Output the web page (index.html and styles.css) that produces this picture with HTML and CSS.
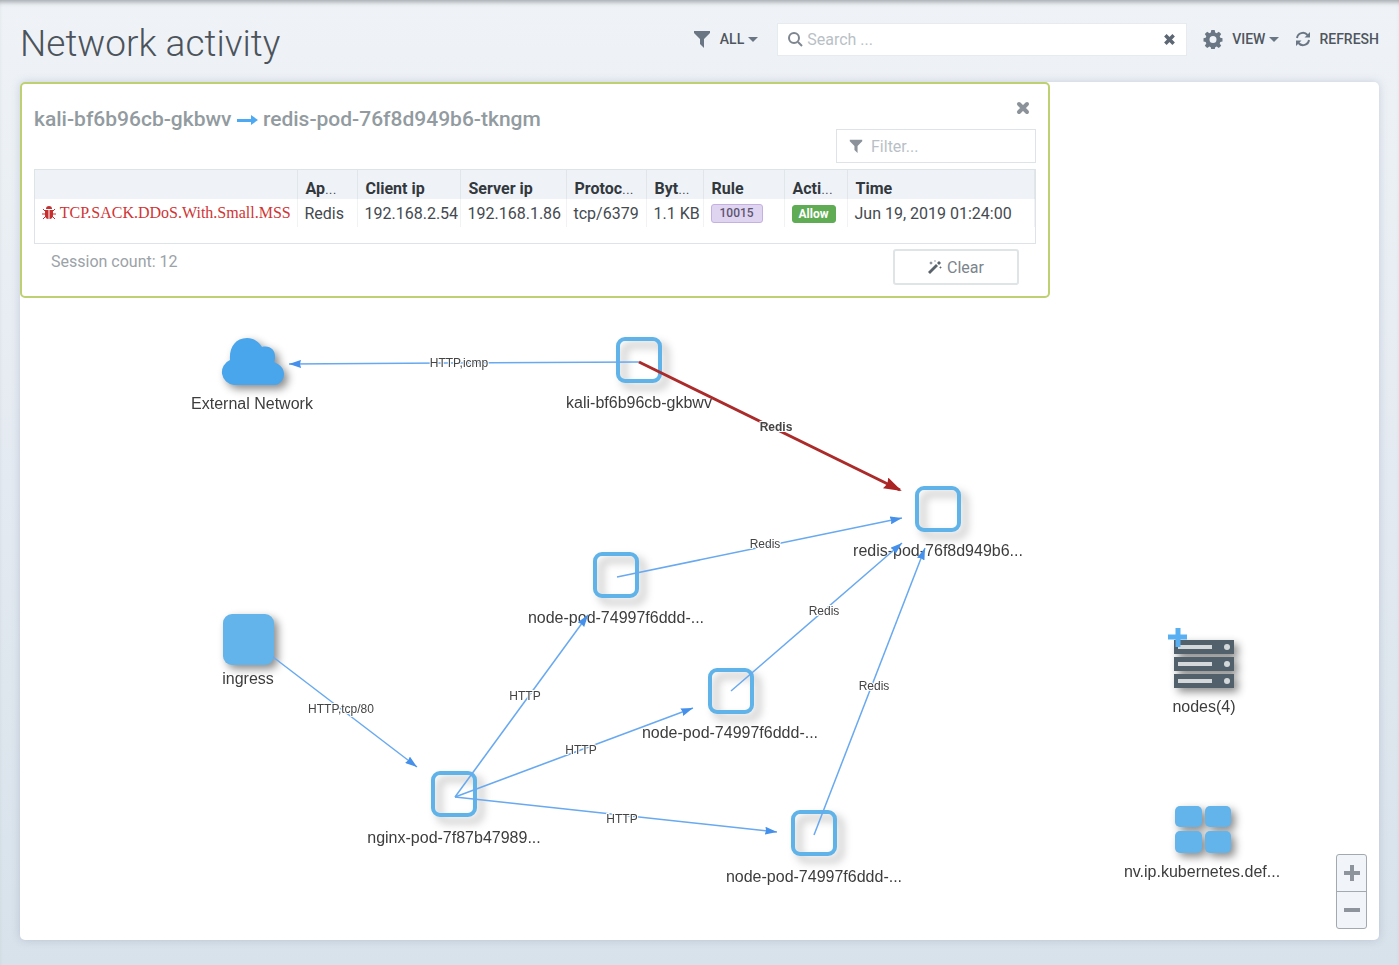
FILE: index.html
```html
<!DOCTYPE html>
<html lang="en">
<head>
    <meta charset="utf-8">
    <title>Network activity</title>
    <link rel="stylesheet" href="styles.css">
</head>
<body>
    <header class="header">
        <h1>Network activity</h1>
        <div class="toolbar">
            <button class="tool" type="button">
                <svg class="icon-filter" width="18" height="18" viewBox="0 0 18 18"><path d="M1 1h16v2l-6 6v9l-4-4V9L1 3z"/></svg>
                ALL
                <span class="caret"></span>
            </button>
            <div class="search">
                <svg width="16" height="16" viewBox="0 0 16 16"><circle cx="7" cy="7" r="5"/><path d="M11 11l4 4"/></svg>
                <input type="text" placeholder="Search ..." aria-label="Search">
                <button class="search-clear" type="button" aria-label="Clear search">
                    <svg width="13" height="13" viewBox="0 0 11 11"><path d="M2 2l7 7M9 2l-7 7"/></svg>
                </button>
            </div>
            <button class="tool view" type="button">
                <svg width="20" height="20" viewBox="0 0 20 20">
                    <path fill-rule="evenodd" d="M8.3 1h3.4l.5 2.6 1.4.6 2.2-1.5 2.4 2.4-1.5 2.2.6 1.4 2.2.5v3.4l-2.2.5-.6 1.4 1.5 2.2-2.4 2.4-2.2-1.5-1.4.6-.5 2.3H8.3l-.5-2.3-1.4-.6-2.2 1.5-2.4-2.4 1.5-2.2-.6-1.4-2.2-.5V9.2l2.2-.5.6-1.4-1.5-2.2 2.4-2.4 2.2 1.5 1.4-.6zM10 7a3.5 3.5 0 1 0 0 7 3.5 3.5 0 0 0 0-7z"/>
                </svg>
                VIEW
                <span class="caret"></span>
            </button>
            <button class="tool refresh" type="button">
                <svg width="16" height="16" viewBox="0 0 16 16">
                    <path class="arc" d="M2 7a6 6 0 0 1 10.5-3M14 9a6 6 0 0 1-10.5 3"/>
                    <path d="M15 1v5.5H9.5zM1 15V9.5h5.5z"/>
                </svg>
                REFRESH
            </button>
        </div>
    </header>

    <main class="canvas">
        <svg class="graph" role="img" aria-label="Network graph">
            <defs>
                <marker id="arrow" markerUnits="userSpaceOnUse" markerWidth="14" markerHeight="8" refX="12" refY="4" orient="auto">
                    <path class="arrow" d="M0 0l12 4-12 4 1-4z"/>
                </marker>
                <marker id="arrow-alert" markerUnits="userSpaceOnUse" markerWidth="20" markerHeight="12" refX="16" refY="6" orient="auto">
                    <path class="arrow-alert" d="M0 0l18 6-18 6 2-6z"/>
                </marker>
                <rect id="pod" x="-21" y="-21" width="42" height="42" rx="7"/>
            </defs>

            <!-- nodes -->
            <g class="node cloud">
                <path d="M214 303a13 13 0 0 1-4-25c-1-12 5-22 17-22 7 0 12 4 15 9 8-2 13 3 13 9 0 3 0 5-1 6 7 3 10 7 10 12 0 6-4 11-10 11z"/>
            </g>
            <g class="node pod">
                <use href="#pod" x="619" y="278"/>
                <use href="#pod" x="918" y="427"/>
                <use href="#pod" x="596" y="493"/>
                <use href="#pod" x="711" y="609"/>
                <use href="#pod" x="794" y="751"/>
                <use href="#pod" x="434" y="712"/>
            </g>
            <g class="node group">
                <rect x="203" y="532" width="51" height="51" rx="9"/>
            </g>
            <g class="node group">
                <rect x="1155" y="724" width="27" height="21" rx="5"/>
                <rect x="1185" y="724" width="26" height="21" rx="5"/>
                <rect x="1155" y="749" width="27" height="22" rx="5"/>
                <rect x="1185" y="749" width="26" height="22" rx="5"/>
            </g>
            <g class="node server">
                <path d="M1154 558h60v14h-60zM1154 575h60v14h-60zM1154 592h60v14h-60z"/>
                <path class="slot" d="M1158 563h34v4h-34zM1158 580h34v4h-34zM1158 597h34v4h-34z"/>
                <circle class="slot" cx="1207" cy="565" r="3"/>
                <circle class="slot" cx="1207" cy="582" r="3"/>
                <circle class="slot" cx="1207" cy="599" r="3"/>
            </g>
            <path class="expand" d="M1158 546v19M1148 555h19"/>

            <g class="node-label">
                <text x="232" y="327">External Network</text>
                <text x="619" y="326">kali-bf6b96cb-gkbwv</text>
                <text x="918" y="474">redis-pod-76f8d949b6...</text>
                <text x="596" y="541">node-pod-74997f6ddd-...</text>
                <text x="710" y="656">node-pod-74997f6ddd-...</text>
                <text x="794" y="800">node-pod-74997f6ddd-...</text>
                <text x="434" y="761">nginx-pod-7f87b47989...</text>
                <text x="228" y="602">ingress</text>
                <text x="1184" y="630">nodes(4)</text>
                <text x="1182" y="795">nv.ip.kubernetes.def...</text>
            </g>

            <!-- edges -->
            <g class="edge">
                <path d="M619 280L269 282"/>
                <path d="M597 495L882 436"/>
                <path d="M711 609L882 461"/>
                <path d="M794 753L905 466"/>
                <path d="M435 715L568 533"/>
                <path d="M435 715L673 626"/>
                <path d="M435 715L757 750"/>
                <path d="M253 575L397 685"/>
            </g>
            <path class="edge-alert" d="M619 280L880 408"/>

            <g class="edge-label">
                <text x="439" y="285">HTTP,icmp</text>
                <text x="745" y="466">Redis</text>
                <text x="804" y="533">Redis</text>
                <text x="854" y="608">Redis</text>
                <text x="505" y="618">HTTP</text>
                <text x="561" y="672">HTTP</text>
                <text x="602" y="741">HTTP</text>
                <text x="321" y="631">HTTP,tcp/80</text>
                <text class="alert" x="756" y="349">Redis</text>
            </g>
        </svg>

        <section class="sessions">
            <div class="sessions-head">
                <h2>
                    kali-bf6b96cb-gkbwv
                    <svg width="21" height="12" viewBox="0 0 21 12"><path d="M0 5h14V1l7 5-7 5V8H0z"/></svg>
                    redis-pod-76f8d949b6-tkngm
                </h2>
                <div class="sessions-tools">
                    <button class="close" type="button" aria-label="Close">
                        <svg width="14" height="14" viewBox="0 0 14 14"><path d="M3 3l8 8M11 3l-8 8"/></svg>
                    </button>
                    <label class="filter">
                        <svg width="14" height="14" viewBox="0 0 18 18"><path d="M1 1h16v2l-6 6v9l-4-4V9L1 3z"/></svg>
                        <input type="text" placeholder="Filter..." aria-label="Filter sessions">
                    </label>
                </div>
            </div>

            <div class="grid">
                <table>
                    <colgroup>
                        <col class="col-threat">
                        <col class="col-app">
                        <col class="col-client">
                        <col class="col-server">
                        <col class="col-protocol">
                        <col class="col-bytes">
                        <col class="col-rule">
                        <col class="col-action">
                        <col>
                    </colgroup>
                    <thead>
                        <tr>
                            <th></th>
                            <th>Ap<i>...</i></th>
                            <th>Client ip</th>
                            <th>Server ip</th>
                            <th>Protoc<i>...</i></th>
                            <th>Byt<i>...</i></th>
                            <th>Rule</th>
                            <th>Acti<i>...</i></th>
                            <th>Time</th>
                        </tr>
                    </thead>
                    <tbody>
                        <tr>
                            <td class="threat">
                                <svg width="14" height="14" viewBox="0 0 14 14">
                                    <path d="M4 3a3 3 0 0 1 6 0z"/>
                                    <path d="M3 4h3.500v9C4 13 3 11 3 9zM7.500 4H11v5c0 2-1 4-3.500 4z"/>
                                    <path class="legs" d="M1 3l3 3M13 3l-3 3M0 8h4M14 8h-4M1 13l3-3M13 13l-3-3"/>
                                </svg>
                                TCP.SACK.DDoS.With.Small.MSS
                            </td>
                            <td>Redis</td>
                            <td>192.168.2.54</td>
                            <td>192.168.1.86</td>
                            <td>tcp/6379</td>
                            <td>1.1 KB</td>
                            <td><span class="badge rule">10015</span></td>
                            <td><span class="badge allow">Allow</span></td>
                            <td>Jun 19, 2019 01:24:00</td>
                        </tr>
                    </tbody>
                </table>
            </div>

            <div class="sessions-foot">
                <span>Session count: 12</span>
                <button class="clear" type="button">
                    <svg width="14" height="14" viewBox="0 0 14 14">
                        <path d="M0 12L8 4l2 2-8 8zM9 3l2-2 2 2-2 2z"/>
                        <path d="M3 1l.5 1.5L5 3l-1.500.5L3 5l-.5-1.500L1 3l1.500-.5zM7 0l.3.7.7.3-.7.3L7 2l-.3-.7L6 1l.7-.3zM12.500 6l.4 1.100 1.100.4-1.100.4-.4 1.100-.4-1.100L11 7.500l1.100-.4z"/>
                    </svg>
                    Clear
                </button>
            </div>
        </section>

        <div class="zoom">
            <button type="button" aria-label="Zoom in">
                <svg width="18" height="18" viewBox="0 0 18 18"><path d="M9 1v16M1 9h16"/></svg>
            </button>
            <button type="button" aria-label="Zoom out">
                <svg width="18" height="18" viewBox="0 0 18 18"><path d="M1 9h16"/></svg>
            </button>
        </div>
    </main>
</body>
</html>
```
FILE: styles.css
```css
* {
    box-sizing: border-box;
}
body {
    margin: 0;
    min-height: 100vh;
    padding: 0 20px 25px;
    display: flex;
    flex-direction: column;
    font-family: Roboto, sans-serif;
    font-size: 16px;
    color: #444a50;
    background: linear-gradient(#eff3f7, #e4eaf1 50%, #d7e2ea);
    box-shadow: inset 0 5px 5px -3px #9da2a8;
}
button, input {
    font: inherit;
    color: inherit;
}
button {
    padding: 0;
    border: none;
    background: none;
    cursor: pointer;
}
svg {
    flex: none;
    fill: currentColor;
}

.header {
    height: 82px;
    display: flex;
    align-items: center;
    justify-content: space-between;
    padding-bottom: 4px;
}
h1 {
    margin: 0;
    padding-top: 8px;
    font-size: 37px;
    font-weight: 300;
    color: #4c535b;
}
.toolbar {
    display: flex;
    align-items: center;
}
.tool {
    display: flex;
    align-items: center;
    gap: 9px;
    font-size: 14px;
    line-height: 20px;
    font-weight: 500;
    color: #50565e;
}
.tool svg {
    color: #6b7684;
}
.caret {
    margin-left: -5px;
    border: 5px solid transparent;
    border-top-color: #6b7684;
    border-bottom: none;
}
.search {
    width: 410px;
    height: 33px;
    margin: 0 16px 0 19px;
    padding: 0 10px 0 9px;
    display: flex;
    align-items: center;
    gap: 4px;
    background: #fff;
    border: 1px solid #e6ebef;
}
.search svg {
    fill: none;
    stroke: #7d858f;
    stroke-width: 2;
}
.search input, .filter input {
    flex: 1;
    min-width: 0;
    padding: 0;
    border: none;
    outline: none;
    background: none;
}
::placeholder {
    color: #b9bfc6;
    opacity: 1;
}
.search-clear {
    display: flex;
}
.search-clear svg {
    stroke: #5d6673;
    stroke-width: 3;
}
.refresh {
    margin-left: 16px;
    gap: 8px;
}
.refresh .arc {
    fill: none;
    stroke: currentColor;
    stroke-width: 2;
}

.canvas {
    position: relative;
    flex: 1;
    min-height: 858px;
    background: #fff;
    border-radius: 5px;
    box-shadow: 0 0 8px rgba(110, 120, 160, .3);
}
.graph {
    position: absolute;
    width: 100%;
    height: 100%;
    font-family: "Liberation Sans", Arial, sans-serif;
    text-anchor: middle;
}
.node {
    filter: drop-shadow(4px 4px 4px rgba(0, 0, 0, .45));
}
.cloud {
    fill: #49a5ec;
}
.pod {
    fill: none;
    stroke: #5fb3e8;
    stroke-width: 4;
    filter: drop-shadow(6px 6px 4px rgba(0, 0, 0, .3));
}
.group {
    fill: #62b4ea;
}
.server {
    fill: #51606b;
}
.slot {
    fill: #d5d8db;
}
.expand {
    stroke: #58b0f2;
    stroke-width: 5;
}
.node-label {
    font-size: 16px;
    fill: #3d3d3d;
}
.edge path {
    fill: none;
    stroke: #68a9f0;
    stroke-width: 1.5;
    marker-end: url(#arrow);
}
.edge-alert {
    stroke: #ab2a2a;
    stroke-width: 3;
    marker-end: url(#arrow-alert);
}
.arrow {
    fill: #4590ea;
}
.arrow-alert {
    fill: #ab2424;
}
.edge-label {
    font-size: 12px;
    fill: #444;
    stroke: #fff;
    stroke-width: 2;
    paint-order: stroke;
}
.edge-label .alert {
    font-weight: bold;
}

.sessions {
    position: absolute;
    top: 0;
    left: 0;
    width: 1030px;
    max-width: 100%;
    padding: 0 12px 11px;
    background: #fff;
    border: 2px solid #bdd072;
    border-radius: 5px;
}
.sessions-head {
    display: flex;
    justify-content: space-between;
    margin-bottom: 6px;
}
h2 {
    margin: 0;
    padding-top: 23px;
    font-size: 21px;
    line-height: 24px;
    font-weight: 500;
    color: #929ba0;
}
h2 svg {
    color: #4ea9f3;
}
.sessions-tools {
    display: flex;
    flex-direction: column;
    align-items: flex-end;
    gap: 14px;
    padding-top: 17px;
}
.close {
    display: flex;
    margin-right: 6px;
}
.close svg {
    stroke: #8b9299;
    stroke-width: 4;
    stroke-linecap: round;
}
.filter {
    width: 200px;
    height: 34px;
    padding: 0 12px;
    display: flex;
    align-items: center;
    gap: 8px;
    border: 1px solid #dde3e7;
    color: #8b9299;
}
.grid {
    height: 75px;
    border: 1px solid #dde4e8;
}
table {
    width: 100%;
    table-layout: fixed;
    border-collapse: collapse;
}
.col-threat { width: 262px; }
.col-app { width: 60px; }
.col-client { width: 103px; }
.col-server { width: 106px; }
.col-protocol { width: 80px; }
.col-bytes { width: 57px; }
.col-rule { width: 81px; }
.col-action { width: 63px; }
th, td {
    padding: 0 0 0 7px;
    text-align: left;
    white-space: nowrap;
    border-right: 1px solid #e0e6ea;
}
th {
    height: 29px;
    padding: 7px 0 0 8px;
    color: #33383d;
    background: #eff3f8;
}
th i {
    font-style: normal;
    font-weight: 300;
}
td {
    height: 28px;
    border-color: #f0f2f4;
}
.threat {
    font-family: "Liberation Serif", "Times New Roman", serif;
    color: #cf3535;
}
.threat svg {
    vertical-align: -2px;
    color: #c62f2f;
}
.legs {
    stroke: currentColor;
    stroke-width: 1;
}
.badge {
    display: inline-block;
    vertical-align: middle;
    padding: 0 8px;
    border: 1px solid #c4b0e2;
    border-radius: 3px;
    font-size: 12px;
    line-height: 17px;
    font-weight: 500;
}
.rule {
    background: #e0d5f1;
    color: #5d5470;
}
.allow {
    padding: 0 6px;
    background: #5fac55;
    border-color: #5fac55;
    color: #fff;
    line-height: 16px;
    font-weight: 700;
}
.sessions-foot {
    display: flex;
    justify-content: space-between;
    padding: 5px 17px 0;
    color: #9ba2a8;
}
.sessions-foot span {
    padding-top: 3px;
}
.clear {
    width: 126px;
    height: 36px;
    display: flex;
    align-items: center;
    justify-content: center;
    gap: 5px;
    border: 2px solid #dfe4e7;
    border-radius: 3px;
    color: #7b858c;
}
.clear svg {
    color: #59636b;
}

.zoom {
    position: absolute;
    right: 12px;
    bottom: 11px;
    display: flex;
    flex-direction: column;
    border: 1px solid #a3a9b0;
    border-radius: 3px;
    background: #f1f5fa;
}
.zoom button {
    width: 29px;
    height: 36px;
    display: flex;
    align-items: center;
    justify-content: center;
}
.zoom button + button {
    height: 37px;
    border-top: 1px solid #a3a9b0;
}
.zoom svg {
    stroke: #8d949c;
    stroke-width: 4;
}
```
